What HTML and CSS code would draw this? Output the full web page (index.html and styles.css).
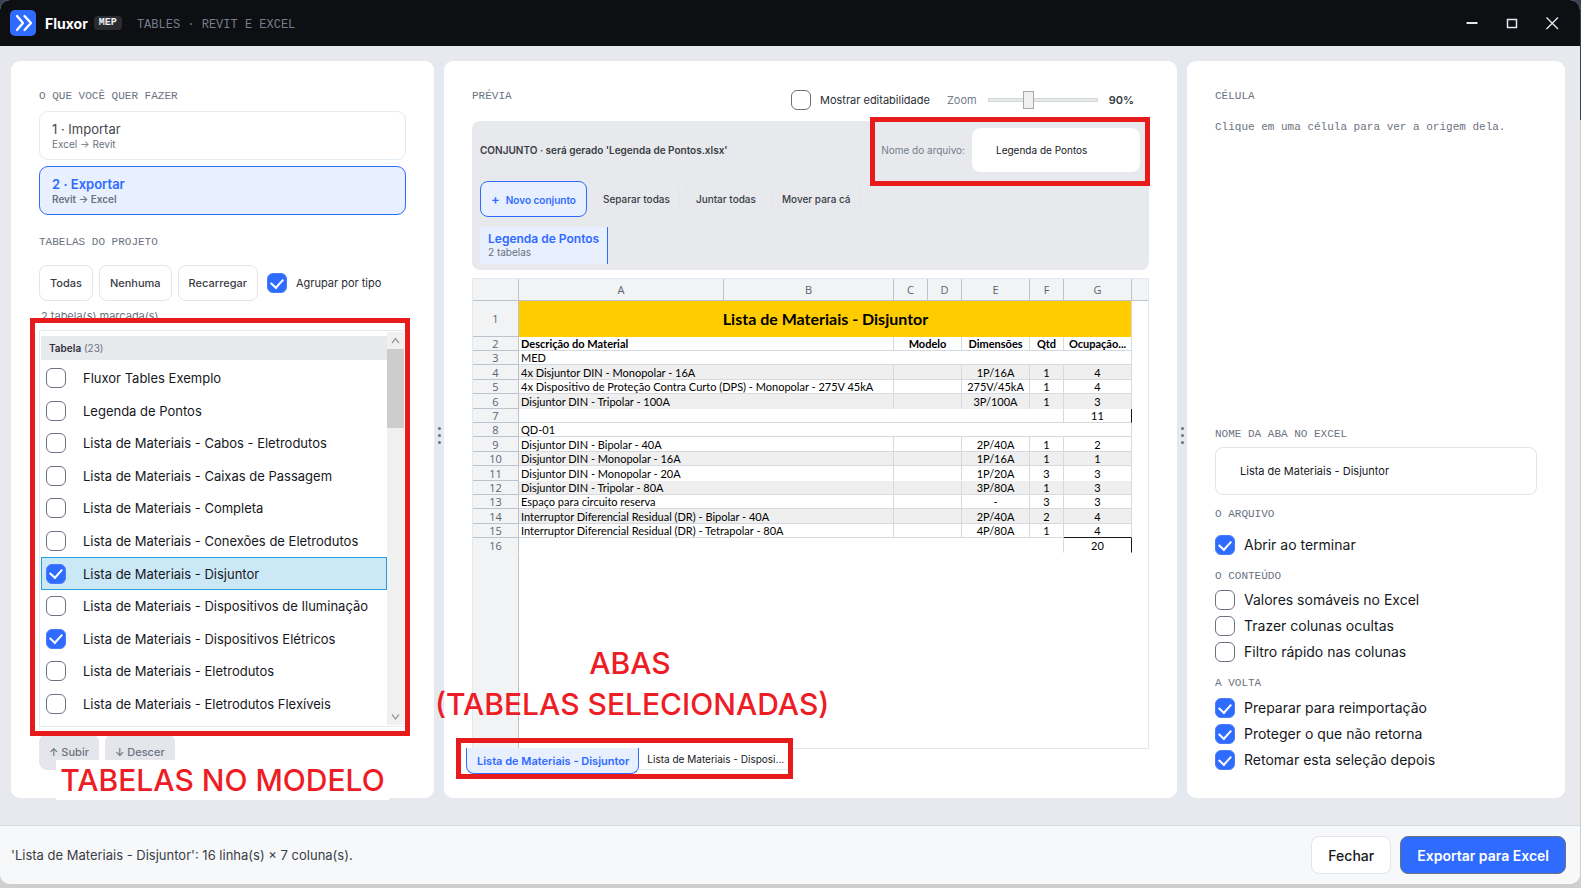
FILE: index.html
```html
<!DOCTYPE html>
<html lang="pt-BR">
<head>
<meta charset="utf-8">
<title>Fluxor MEP - Tables</title>
<link rel="stylesheet" href="styles.css">
</head>
<body>
<div class="window">
  <header class="titlebar">
    <svg class="logo" viewBox="0 0 26 26" aria-hidden="true"><rect width="26" height="26" rx="5" fill="#2f6bff"/><path d="M7 6l6 7-6 7M14.500 6l6.500 7-6.500 7" fill="none" stroke="#fff" stroke-width="2.300" stroke-linecap="round" stroke-linejoin="round"/></svg>
    <h1 class="brand">Fluxor</h1>
    <span class="badge">MEP</span>
    <span class="subtitle">TABLES · REVIT E EXCEL</span>
    <nav class="window-buttons">
      <button type="button" aria-label="Minimizar"><svg viewBox="0 0 16 16"><path d="M2.500 8h11" stroke="#dfe9f2" stroke-width="2"/></svg></button>
      <button type="button" aria-label="Maximizar"><svg viewBox="0 0 16 16"><rect x="3.500" y="4.500" width="9" height="8" fill="none" stroke="#dfe9f2" stroke-width="1.500"/></svg></button>
      <button type="button" aria-label="Fechar janela"><svg viewBox="0 0 16 16"><path d="M2.500 2.500l11.500 11.500M14 2.500L2.500 14" stroke="#dfe9f2" stroke-width="1.400"/></svg></button>
    </nav>
  </header>

  <main class="workspace">
    <section class="panel panel-left">
      <h2 class="heading">O QUE VOCÊ QUER FAZER</h2>
      <div class="modes">
        <button type="button" class="mode"><span class="mode-name">1 · Importar</span><span class="mode-path">Excel → Revit</span></button>
        <button type="button" class="mode mode-active"><span class="mode-name">2 · Exportar</span><span class="mode-path">Revit → Excel</span></button>
      </div>
      <h2 class="heading heading-tables">TABELAS DO PROJETO</h2>
      <div class="table-actions">
        <button type="button" class="btn">Todas</button>
        <button type="button" class="btn">Nenhuma</button>
        <button type="button" class="btn">Recarregar</button>
        <label class="check check-small"><input type="checkbox" checked><span>Agrupar por tipo</span></label>
      </div>
      <p class="count">2 tabela(s) marcada(s)</p>
      <div class="picker marked">
        <div class="picker-main">
          <div class="picker-head"><b>Tabela</b> (23)</div>
          <ul class="picker-list">
            <li><label><input type="checkbox"><span>Fluxor Tables Exemplo</span></label></li>
            <li><label><input type="checkbox"><span>Legenda de Pontos</span></label></li>
            <li><label><input type="checkbox"><span>Lista de Materiais - Cabos - Eletrodutos</span></label></li>
            <li><label><input type="checkbox"><span>Lista de Materiais - Caixas de Passagem</span></label></li>
            <li><label><input type="checkbox"><span>Lista de Materiais - Completa</span></label></li>
            <li><label><input type="checkbox"><span>Lista de Materiais - Conexões de Eletrodutos</span></label></li>
            <li class="selected"><label><input type="checkbox" checked><span>Lista de Materiais - Disjuntor</span></label></li>
            <li><label><input type="checkbox"><span>Lista de Materiais - Dispositivos de Iluminação</span></label></li>
            <li><label><input type="checkbox" checked><span>Lista de Materiais - Dispositivos Elétricos</span></label></li>
            <li><label><input type="checkbox"><span>Lista de Materiais - Eletrodutos</span></label></li>
            <li><label><input type="checkbox"><span>Lista de Materiais - Eletrodutos Flexíveis</span></label></li>
          </ul>
        </div>
        <div class="scrollbar">
          <svg viewBox="0 0 17 17"><path d="M5 11l3.500-4.500L12 11" fill="none" stroke="#9a9a9a" stroke-width="1.300"/></svg>
          <div class="thumb"></div>
          <svg class="down" viewBox="0 0 17 17"><path d="M5 6.500L8.500 11 12 6.500" fill="none" stroke="#9a9a9a" stroke-width="1.300"/></svg>
        </div>
      </div>
      <div class="order">
        <button type="button" class="btn btn-muted">↑ Subir</button>
        <button type="button" class="btn btn-muted">↓ Descer</button>
      </div>
      <p class="note note-model">TABELAS NO MODELO</p>
    </section>

    <div class="splitter"><i></i><i></i><i></i></div>

    <section class="panel panel-preview">
      <div class="toolbar">
        <h2 class="heading">PRÉVIA</h2>
        <label class="check check-small"><input type="checkbox"><span>Mostrar editabilidade</span></label>
        <label class="zoom"><span>Zoom</span><input type="range" min="0" max="100" value="35"></label>
        <output class="zoom-value">90%</output>
      </div>
      <div class="group">
        <div class="group-top">
          <strong class="group-title">CONJUNTO · será gerado 'Legenda de Pontos.xlsx'</strong>
          <label class="filename marked"><span>Nome do arquivo:</span><input type="text" value="Legenda de Pontos"></label>
        </div>
        <div class="group-actions">
          <button type="button" class="btn btn-new"><span class="plus">+</span>Novo conjunto</button>
          <button type="button" class="btn btn-ghost">Separar todas</button>
          <button type="button" class="btn btn-ghost">Juntar todas</button>
          <button type="button" class="btn btn-ghost">Mover para cá</button>
        </div>
        <button type="button" class="set"><b>Legenda de Pontos</b><span>2 tabelas</span></button>
      </div>
      <div class="sheet">
        <table>
          <colgroup><col class="c-num"><col class="c-a"><col class="c-b"><col class="c-s"><col class="c-s"><col class="c-m"><col class="c-s"><col class="c-m"><col></colgroup>
          <thead><tr><th></th><th>A</th><th>B</th><th>C</th><th>D</th><th>E</th><th>F</th><th>G</th><th class="rest"></th></tr></thead>
          <tbody>
            <tr class="title"><th>1</th><td colspan="7">Lista de Materiais - Disjuntor</td></tr>
            <tr class="labels"><th>2</th><td colspan="2">Descrição do Material</td><td colspan="2">Modelo</td><td>Dimensões</td><td>Qtd</td><td>Ocupação...</td></tr>
            <tr><th>3</th><td colspan="7">MED</td></tr>
            <tr class="alt"><th>4</th><td colspan="2">4x Disjuntor DIN - Monopolar - 16A</td><td colspan="2"></td><td>1P/16A</td><td>1</td><td>4</td></tr>
            <tr><th>5</th><td colspan="2">4x Dispositivo de Proteção Contra Curto (DPS) - Monopolar - 275V 45kA</td><td colspan="2"></td><td>275V/45kA</td><td>1</td><td>4</td></tr>
            <tr class="alt open"><th>6</th><td colspan="2">Disjuntor DIN - Tripolar - 100A</td><td colspan="2"></td><td>3P/100A</td><td>1</td><td>3</td></tr>
            <tr class="total"><th>7</th><td colspan="6"></td><td>11</td></tr>
            <tr><th>8</th><td colspan="7">QD-01</td></tr>
            <tr><th>9</th><td colspan="2">Disjuntor DIN - Bipolar - 40A</td><td colspan="2"></td><td>2P/40A</td><td>1</td><td>2</td></tr>
            <tr class="alt"><th>10</th><td colspan="2">Disjuntor DIN - Monopolar - 16A</td><td colspan="2"></td><td>1P/16A</td><td>1</td><td>1</td></tr>
            <tr class="open"><th>11</th><td colspan="2">Disjuntor DIN - Monopolar - 20A</td><td colspan="2"></td><td>1P/20A</td><td>3</td><td>3</td></tr>
            <tr class="alt"><th>12</th><td colspan="2">Disjuntor DIN - Tripolar - 80A</td><td colspan="2"></td><td>3P/80A</td><td>1</td><td>3</td></tr>
            <tr><th>13</th><td colspan="2">Espaço para circuito reserva</td><td colspan="2"></td><td>-</td><td>3</td><td>3</td></tr>
            <tr class="alt"><th>14</th><td colspan="2">Interruptor Diferencial Residual (DR) - Bipolar - 40A</td><td colspan="2"></td><td>2P/40A</td><td>2</td><td>4</td></tr>
            <tr class="before-total"><th>15</th><td colspan="2">Interruptor Diferencial Residual (DR) - Tetrapolar - 80A</td><td colspan="2"></td><td>4P/80A</td><td>1</td><td>4</td></tr>
            <tr class="total last"><th>16</th><td colspan="6"></td><td>20</td></tr>
          </tbody>
        </table>
      </div>
      <div class="tabs marked">
        <button type="button" class="tab tab-active">Lista de Materiais - Disjuntor</button>
        <button type="button" class="tab">Lista de Materiais - Disposi...</button>
      </div>
      <p class="note note-tabs">ABAS<br>(TABELAS SELECIONADAS)</p>
    </section>

    <div class="splitter"><i></i><i></i><i></i></div>

    <section class="panel panel-right">
      <h2 class="heading">CÉLULA</h2>
      <p class="hint">Clique em uma célula para ver a origem dela.</p>
      <div class="options">
        <label class="heading" for="sheet-name">NOME DA ABA NO EXCEL</label>
        <input class="sheet-name" id="sheet-name" type="text" value="Lista de Materiais - Disjuntor">
        <h2 class="heading">O ARQUIVO</h2>
        <div class="checks checks-file">
          <label class="check"><input type="checkbox" checked><span>Abrir ao terminar</span></label>
        </div>
        <h2 class="heading">O CONTEÚDO</h2>
        <div class="checks">
          <label class="check"><input type="checkbox"><span>Valores somáveis no Excel</span></label>
          <label class="check"><input type="checkbox"><span>Trazer colunas ocultas</span></label>
          <label class="check"><input type="checkbox"><span>Filtro rápido nas colunas</span></label>
        </div>
        <h2 class="heading">A VOLTA</h2>
        <div class="checks">
          <label class="check"><input type="checkbox" checked><span>Preparar para reimportação</span></label>
          <label class="check"><input type="checkbox" checked><span>Proteger o que não retorna</span></label>
          <label class="check"><input type="checkbox" checked><span>Retomar esta seleção depois</span></label>
        </div>
      </div>
    </section>
  </main>

  <footer class="footer">
    <p>'Lista de Materiais - Disjuntor': 16 linha(s) × 7 coluna(s).</p>
    <button type="button" class="action">Fechar</button>
    <button type="button" class="action action-primary">Exportar para Excel</button>
  </footer>
</div>
</body>
</html>
```
FILE: styles.css
```css
* { box-sizing: border-box; }

html { background: linear-gradient(#3a4354 120px, #cfcfcf 120px); }

body {
  margin: 0;
  min-height: 100vh;
  padding: 0 1px 4px 0;
  display: flex;
  font-family: Inter, "Liberation Sans", sans-serif;
  font-size: 13px;
  color: #16181d;
}

h1, h2, p, ul { margin: 0; padding: 0; font-weight: 400; }
ul { list-style: none; }
button, input { font: inherit; color: inherit; margin: 0; }
button { cursor: pointer; white-space: nowrap; }

.window {
  flex: 1;
  display: flex;
  flex-direction: column;
  border-radius: 10px;
  overflow: hidden;
  background: #e7e9ee;
}

/* Title bar */
.titlebar {
  height: 46px;
  padding: 0 20px 0 10px;
  display: flex;
  align-items: center;
  background: #0d0f13;
}
.logo { width: 26px; height: 26px; }
.brand { margin-left: 9px; font-size: 14px; font-weight: 700; color: #fff; }
.badge {
  margin-left: 6px;
  padding: 0 5px;
  border-radius: 4px;
  background: #2a2c30;
  color: #eef0f3;
  font: 700 10px/14px "Liberation Mono", monospace;
}
.subtitle {
  margin-left: 15px;
  padding-top: 3px;
  font: 12px/16px "Liberation Mono", monospace;
  color: #767d8b;
}
.window-buttons { margin-left: auto; display: flex; gap: 24px; }
.window-buttons button { width: 16px; height: 16px; padding: 0; border: 0; background: none; }
.window-buttons svg { display: block; }

/* Columns */
.workspace {
  flex: 1;
  padding: 15px 15px 27px 11px;
  display: grid;
  grid-template-columns: 423fr 10px 733fr 10px 378fr;
}
.panel {
  position: relative;
  min-width: 0;
  padding: 28px;
  display: flex;
  flex-direction: column;
  background: #fff;
  border-radius: 9px;
}
.splitter {
  display: flex;
  flex-direction: column;
  align-items: center;
  justify-content: center;
  gap: 4px;
  padding-top: 12px;
  background: #e4e9f0;
}
.splitter i { width: 3px; height: 3px; border-radius: 2px; background: #6b7280; }

.heading {
  display: block;
  padding-top: 1px;
  font: 11px/13px "Liberation Mono", monospace;
  color: #6b7280;
}

/* Check boxes */
input[type="checkbox"] {
  appearance: none;
  flex: none;
  width: 20px;
  height: 20px;
  display: grid;
  place-items: center;
  border: 1px solid #6b7280;
  border-radius: 6px;
  background: #fff;
}
input[type="checkbox"]:checked { background: #2f6bff; border-color: #4a7dfb; }
input[type="checkbox"]:checked::after {
  content: "";
  width: 6px;
  height: 10px;
  margin-bottom: 3px;
  border: solid #fff;
  border-width: 0 2px 2px 0;
  transform: rotate(42deg);
}
.check { display: flex; align-items: center; gap: 9px; font-size: 14px; line-height: 20px; white-space: nowrap; }
.check-small { font-size: 11px; color: #2b2e35; }

/* Buttons */
.btn {
  height: 36px;
  padding: 0 10px;
  border: 1px solid #e4e5ea;
  border-radius: 8px;
  background: #fff;
  font-size: 11px;
  font-weight: 500;
  color: #3a3d45;
}
.btn-muted { padding: 0 9px; border-color: #e4e6eb; background: #e4e6eb; color: #6b7280; }

/* Left panel */
.modes { margin-top: 8px; display: grid; gap: 6px; }
.mode {
  height: 49px;
  padding: 0 12px;
  display: flex;
  flex-direction: column;
  justify-content: center;
  align-items: flex-start;
  border: 1px solid #e2eaf2;
  border-radius: 9px;
  background: #fff;
}
.mode-name { font-size: 13px; line-height: 17px; color: #45484f; }
.mode-path { font-size: 10px; line-height: 13px; color: #6b7280; }
.mode-active { border-color: #2f6bff; background: #e8effe; }
.mode-active .mode-name { font-weight: 600; color: #2f6bff; }
.mode-active .mode-path { font-weight: 600; }
.heading-tables { margin-top: 20px; }
.table-actions { margin-top: 16px; display: flex; align-items: center; gap: 6px; }
.table-actions .check { margin-left: 3px; }
.count { margin: 8px 0 7px 2px; font-size: 11px; line-height: 14px; color: #6b7280; }

.marked { position: relative; }
.marked::after {
  content: "";
  position: absolute;
  border: 5px solid #e71b1b;
  pointer-events: none;
}

.picker { flex: 1; display: flex; padding: 1px; border: 1px solid #e2eaf2; }
.picker::after { inset: -13px -5px -10px -10px; }
.picker-main { flex: 1; min-width: 0; display: flex; flex-direction: column; padding-top: 4px; }
.picker-head { padding: 0 8px; background: #e7e9ed; font-size: 10px; line-height: 24px; color: #6b7280; }
.picker-head b { font-weight: 600; color: #2f323a; }
.picker-list { flex: 1; display: grid; grid-auto-rows: 1fr; padding: 2px 0 5px; }
.picker-list li { display: grid; border: 1px solid transparent; }
.picker-list label { display: flex; align-items: center; gap: 17px; padding-left: 4px; font-size: 13px; line-height: 18px; white-space: nowrap; }
.picker-list .selected { background: #cbe8f6; border-color: #26a0da; }
.scrollbar { width: 17px; display: flex; flex-direction: column; background: #f0f0f0; }
.scrollbar svg { width: 17px; height: 17px; }
.scrollbar .down { margin-top: auto; }
.thumb { height: 20%; background: #cdcdcd; }
.order { margin-top: 7px; display: flex; gap: 6px; }

.note { position: absolute; font-size: 30px; font-weight: 500; line-height: 41px; color: #ee1c25; text-align: center; white-space: nowrap; }
.note-model { left: 45px; bottom: -2px; width: 333px; line-height: 40px; background: #fff; }
.note-tabs { left: -9px; bottom: 73px; width: 390px; }

/* Preview */
.panel-preview { padding-bottom: 24px; }
.toolbar { height: 22px; display: flex; align-items: center; padding-right: 15px; }
.toolbar .heading { align-self: flex-start; margin-right: auto; }
.zoom { margin-left: 17px; display: flex; align-items: center; gap: 11px; font-size: 11px; color: #767d8b; }
.zoom input { appearance: none; width: 110px; height: 20px; background: none; }
.zoom input::-webkit-slider-runnable-track { height: 4px; border: 1px solid #d3d7d7; background: #e6eaea; }
.zoom input::-webkit-slider-thumb { appearance: none; width: 11px; height: 18px; margin-top: -8px; border: 1px solid #a8a8a8; background: #f0f0f0; }
.zoom-value { margin-left: 11px; font-size: 11px; font-weight: 600; color: #3a3d45; }

.group { margin-top: 10px; padding: 7px 9px 6px 8px; border-radius: 8px; background: #e7e9ed; }
.group-top { display: flex; align-items: center; justify-content: space-between; }
.group-title { font-size: 10px; font-weight: 600; color: #3a3d45; }
.filename { display: flex; align-items: center; gap: 7px; font-size: 10px; color: #767d8b; }
.filename::after { inset: -11px -10px -14px -11px; }
.filename input { width: 168px; height: 44px; padding: 0 23px; border: 1px solid #fff; border-radius: 8px; background: #fff; font-size: 10px; color: #16181d; }
.group-actions { margin-top: 9px; display: flex; gap: 6px; }
.group-actions .btn { font-size: 10px; }
.group-actions .btn-ghost { padding: 0 9px; border-color: #e4e6eb; background: transparent; }
.group-actions .btn-new { border-color: #2f6bff; background: #e8effe; color: #2f6bff; font-weight: 600; }
.plus { margin-right: 6px; font-size: 13px; }
.set {
  margin-top: 10px;
  height: 37px;
  padding: 0 8px;
  display: flex;
  flex-direction: column;
  justify-content: center;
  align-items: flex-start;
  border: 0;
  border-right: 1px solid #2f6bff;
  background: #e8effe;
  font-size: 10px;
  line-height: 12px;
  color: #6b7280;
}
.set b { font-size: 12px; font-weight: 600; line-height: 15px; color: #2f6bff; }
.set span { padding-bottom: 3px; }

/* Spreadsheet */
.sheet {
  flex: 1;
  margin-top: 8px;
  border: 1px solid #e0e9f1;
  background: linear-gradient(90deg, #f1f3f5 45px, #bcc3cd 45px, #bcc3cd 46px, #fff 46px);
}
.sheet table { width: 100%; table-layout: fixed; border-collapse: separate; border-spacing: 0; }
.c-num { width: 46px; }
.c-a { width: 205px; }
.c-b { width: 170px; }
.c-s { width: 34px; }
.c-m { width: 68px; }
.sheet th {
  padding: 0;
  border: solid #bcc3cd;
  border-width: 0 1px 1px 0;
  background: #f1f3f5;
  font: 11px/13px "Open Sans", sans-serif;
  color: #5b6372;
}
.sheet thead th { height: 22px; }
.sheet .rest { border-right: 0; }
.sheet td {
  height: 14px;
  padding: 0 1px;
  border: solid #d5d9e0;
  border-width: 0 1px 1px 0;
  background: #fff;
  font: 11px/13px Lato, sans-serif;
  color: #000;
  text-align: center;
  white-space: nowrap;
  overflow: hidden;
}
.sheet td:nth-child(2) { padding-left: 2px; text-align: left; }
.sheet tr:nth-child(5n+6) td, .sheet tr:nth-child(5n+4) td { height: 15px; }
.sheet .alt td { background: #efefef; }
.sheet .open td { border-bottom-color: transparent; }
.sheet .labels td { font-weight: 700; }
.sheet .title td { height: 36px; border-bottom: 0; background: #fc0; font-size: 16px; line-height: 20px; font-weight: 700; text-align: center; }
.sheet .total td:last-child { border-right-color: #16181d; }
.sheet .before-total td:last-child { border-bottom-color: #16181d; }
.sheet .last td, .sheet .last th { border-bottom-color: transparent; }

.tabs { align-self: flex-start; margin: -1px 0 0 -6px; display: flex; align-items: flex-start; }
.tabs::after { inset: -10px -5px -5px -10px; }
.tab { height: 22px; padding: 0 4px 0 8px; border: 0; border-bottom: 1px solid #e2eaf2; background: #fff; font-size: 10px; }
.tab-active { height: 26px; padding: 0 9px 0 10px; border: solid #2f6bff; border-width: 0 1px 1px; border-radius: 0 0 8px 8px; background: #e8effe; font-size: 11px; font-weight: 600; color: #2f6bff; }

/* Right panel */
.hint { margin-top: 17px; font: 11px/14px "Liberation Mono", monospace; color: #6b7280; }
.options { margin-top: auto; display: flex; flex-direction: column; }
.sheet-name { width: 100%; height: 48px; margin: 6px 0 12px; padding: 0 24px; border: 1px solid #e4e5ea; border-radius: 8px; font-size: 11px; background: #fff; }
.checks { margin: 7px 0 14px; display: grid; gap: 6px; }
.checks-file { margin-top: 14px; }
.checks:last-child { margin: 8px 0 0; }

/* Footer */
.footer {
  height: 59px;
  padding: 0 14px 0 11px;
  display: flex;
  align-items: center;
  gap: 9px;
  border-top: 1px solid #d8dbe0;
  background: #f7f8fa;
}
.footer p { margin-right: auto; font-size: 13px; color: #3a3d45; }
.action { height: 38px; padding: 0 16px; border: 1px solid #e4e5ea; border-radius: 8px; background: #fff; font-size: 14px; font-weight: 500; }
.action-primary { border-color: #6b7280; background: #2f6bff; color: #fff; font-weight: 600; }
```
